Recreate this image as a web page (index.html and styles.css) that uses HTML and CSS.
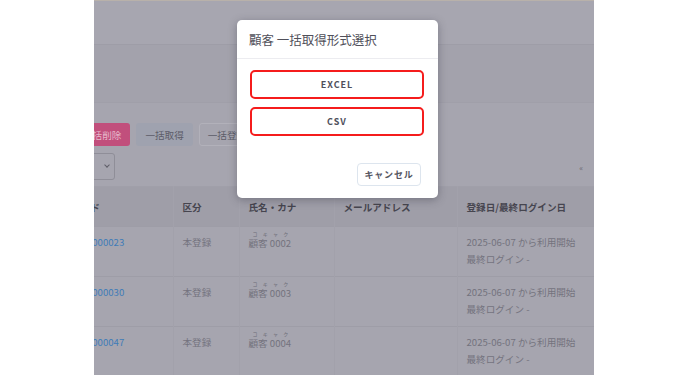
FILE: index.html
```html
<!DOCTYPE html>
<html lang="ja">
<head>
<meta charset="UTF-8">
<meta name="viewport" content="width=device-width, initial-scale=1.0">
<title>顧客一覧</title>
<link rel="stylesheet" href="styles.css">
</head>
<body>

<div class="frame">
    <div class="topbar"></div>
    <div class="band"></div>

    <div class="toolbar">
        <button class="btn btn-danger">一括削除</button>
        <button class="btn btn-soft">一括取得</button>
        <button class="btn btn-outline">一括登録</button>
    </div>

    <div class="filter-row">
        <div class="select-box"><span class="chevron"></span></div>
        <span class="collapse">&laquo;</span>
    </div>

    <table class="list">
        <colgroup>
            <col class="c-code">
            <col class="c-kind">
            <col class="c-name">
            <col class="c-mail">
            <col class="c-date">
        </colgroup>
        <thead>
            <tr>
                <th>コード</th>
                <th>区分</th>
                <th>氏名・カナ</th>
                <th>メールアドレス</th>
                <th>登録日/最終ログイン日</th>
            </tr>
        </thead>
        <tbody>
            <tr>
                <td><a href="#">0000000023</a></td>
                <td>本登録</td>
                <td class="name-cell"><span class="name"><span class="kana">コキャク</span>顧客 0002</span></td>
                <td></td>
                <td>2025-06-07 から利用開始<br>最終ログイン -</td>
            </tr>
            <tr>
                <td><a href="#">0000000030</a></td>
                <td>本登録</td>
                <td class="name-cell"><span class="name"><span class="kana">コキャク</span>顧客 0003</span></td>
                <td></td>
                <td>2025-06-07 から利用開始<br>最終ログイン -</td>
            </tr>
            <tr>
                <td><a href="#">0000000047</a></td>
                <td>本登録</td>
                <td class="name-cell"><span class="name"><span class="kana">コキャク</span>顧客 0004</span></td>
                <td></td>
                <td>2025-06-07 から利用開始<br>最終ログイン -</td>
            </tr>
        </tbody>
    </table>

    <div class="modal">
        <div class="modal-header">顧客 一括取得形式選択</div>
        <div class="modal-body">
            <button class="choice">EXCEL</button>
            <button class="choice">CSV</button>
        </div>
        <div class="modal-footer">
            <button class="cancel">キャンセル</button>
        </div>
    </div>
</div>

</body>
</html>
```

FILE: styles.css
```css
body {
    margin: 0;
    padding: 0;
    background-color: #fff;
    font-family: "Noto Sans CJK JP", "Noto Sans", sans-serif;
}
.frame {
    position: relative;
    width: 500px;
    height: 375px;
    margin: 0 auto;
    overflow: hidden;
    background-color: #a6a5af;
    border-top: 1px solid #b8b1aa;
    box-sizing: border-box;
    font-size: 9.6px;
    color: #74737e;
}
.topbar {
    height: 43px;
    background-color: #a7a6b0;
    border-bottom: 1px solid #9e9da7;
}
.band {
    height: 57px;
    background-color: #a3a2ac;
    border-bottom: 1px solid #a09fa9;
}
.toolbar {
    display: flex;
    gap: 6px;
    margin: 20px 0 0 -20px;
}
.btn {
    height: 23px;
    padding: 0 8px;
    font-family: inherit;
    font-size: 9.6px;
    border-radius: 3px;
    border: 1px solid transparent;
}
.btn-danger {
    background-color: #c14f7c;
    color: #e6b8ca;
}
.btn-soft {
    background-color: #9fa2af;
    color: #5d5d69;
}
.btn-outline {
    background-color: #a6a5af;
    border-color: #b2b1ba;
    color: #5d5d69;
}
.filter-row {
    display: flex;
    justify-content: space-between;
    align-items: center;
    margin-top: 7px;
    padding-right: 11px;
}
.select-box {
    position: relative;
    width: 60px;
    height: 25px;
    margin-left: -41px;
    border: 1px solid #8f8e98;
    border-radius: 3px;
}
.chevron {
    position: absolute;
    right: 5px;
    top: 9px;
    width: 3px;
    height: 3px;
    border-right: 1px solid #5f5e68;
    border-bottom: 1px solid #5f5e68;
    transform: rotate(45deg);
}
.collapse {
    font-size: 8px;
    color: #6a6973;
    margin-top: 2px;
}
.list {
    width: 532px;
    margin: 6px 0 0 -32px;
    border-collapse: collapse;
    table-layout: fixed;
}
.c-code { width: 111px; }
.c-kind { width: 66px; }
.c-name { width: 95px; }
.c-mail { width: 123px; }
.c-date { width: 137px; }
.list th {
    height: 40px;
    padding: 0 9px;
    text-align: left;
    font-weight: bold;
    color: #46454f;
    background-color: #9f9ea8;
    border-top: 1px solid #a09fa9;
    border-right: 1px solid #a2a1ab;
    box-sizing: border-box;
}
.list td {
    height: 50px;
    padding: 7px 9px 0;
    vertical-align: top;
    line-height: 17px;
    border-top: 1px solid #9e9da7;
    border-right: 1px solid #a2a1ab;
    box-sizing: border-box;
}
.list td a {
    color: #3f7cb8;
    text-decoration: none;
}
.list td.name-cell {
    padding-top: 3px;
}
.name {
    display: inline-block;
    line-height: 11px;
}
.kana {
    display: block;
    padding: 0 3px 0 4px;
    font-size: 5px;
    line-height: 8px;
    text-align-last: justify;
    color: #6e6d78;
}
.modal {
    position: absolute;
    left: 143px;
    top: 19px;
    width: 201px;
    height: 178px;
    background-color: #fff;
    border-radius: 5px;
    box-shadow: 0 2px 8px rgba(40, 40, 55, 0.35);
    box-sizing: border-box;
}
.modal-header {
    height: 39px;
    padding: 0 12px;
    line-height: 40px;
    font-size: 12.5px;
    color: #50505a;
    border-bottom: 1px solid #ececf0;
    box-sizing: border-box;
}
.modal-body {
    display: flex;
    flex-direction: column;
    gap: 8px;
    padding: 11px 14px 0 13px;
}
.choice {
    height: 29px;
    background-color: #fff;
    border: 2px solid #f51c1c;
    border-radius: 5px;
    font-family: inherit;
    font-size: 9px;
    font-weight: bold;
    letter-spacing: 1px;
    color: #4e4f5b;
}
.modal-footer {
    display: flex;
    justify-content: flex-end;
    padding: 27px 17px 0 0;
}
.cancel {
    width: 64px;
    height: 23px;
    background-color: #fff;
    border: 1px solid #dde5ee;
    border-radius: 4px;
    font-family: inherit;
    font-size: 9px;
    font-weight: bold;
    letter-spacing: 0.8px;
    color: #55555f;
}
```
